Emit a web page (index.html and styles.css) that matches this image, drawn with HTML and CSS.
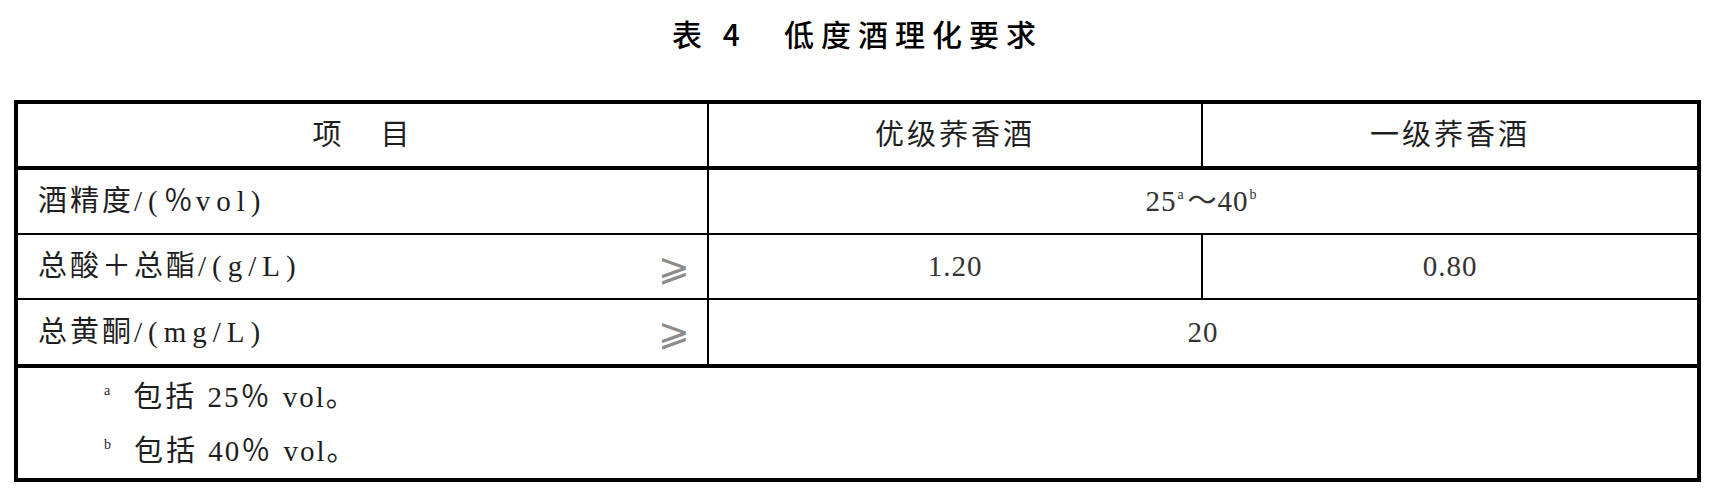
FILE: index.html
```html
<!DOCTYPE html>
<html lang="zh-CN">
<head>
<meta charset="utf-8">
<title>表 4 低度酒理化要求</title>
<link rel="stylesheet" href="styles.css">
</head>
<body>
<div class="page">
  <h1 class="title">表 4　低度酒理化要求</h1>
  <table class="spec">
    <colgroup>
      <col class="c1">
      <col class="c2">
      <col class="c3">
    </colgroup>
    <thead>
      <tr>
        <th class="head">项<span class="sp"></span>目</th>
        <th class="head">优级荞香酒</th>
        <th class="head last">一级荞香酒</th>
      </tr>
    </thead>
    <tbody>
      <tr>
        <td class="row">
          <div class="label"><span>酒精度<span class="lat">/(</span>％<span class="lat">vol)</span></span></div>
        </td>
        <td class="row val last" colspan="2">25<sup class="sup">a</sup>～40<sup class="sup">b</sup></td>
      </tr>
      <tr>
        <td class="row">
          <div class="label"><span>总酸＋总酯<span class="lat">/(g/L)</span></span><span class="ge">⩾</span></div>
        </td>
        <td class="row val">1.20</td>
        <td class="row val last">0.80</td>
      </tr>
      <tr>
        <td class="row end">
          <div class="label"><span>总黄酮<span class="lat">/(mg/L)</span></span><span class="ge">⩾</span></div>
        </td>
        <td class="row val end last" colspan="2">20</td>
      </tr>
      <tr>
        <td class="notes" colspan="3">
          <div class="note"><sup class="nsup">a</sup>包括 <span class="nlat">25</span>％ <span class="nlat">vol</span>。</div>
          <div class="note"><sup class="nsup">b</sup>包括 <span class="nlat">40</span>％ <span class="nlat">vol</span>。</div>
        </td>
      </tr>
    </tbody>
  </table>
</div>
</body>
</html>
```
FILE: styles.css
```css
* {
  box-sizing: border-box;
}

html,
body {
  margin: 0;
  background: #ffffff;
}

body {
  font-family: "Liberation Serif", "Noto Sans CJK SC", serif;
  color: #1e1e1e;
}

.page {
  padding: 13px 19px 0 14px;
}

.title {
  margin: 0;
  height: 40px;
  line-height: 40px;
  text-align: center;
  font-family: "Noto Sans CJK SC", sans-serif;
  font-size: 30px;
  font-weight: 500;
  letter-spacing: 7px;
  color: #000000;
}

.spec {
  margin-top: 47px;
  width: 1687px;
  table-layout: fixed;
  border-collapse: separate;
  border-spacing: 0;
  border: 4px solid #000000;
  font-size: 29px;
}

.c1 {
  width: 691px;
}

.c2 {
  width: 494px;
}

.c3 {
  width: 494px;
}

.spec th,
.spec td {
  padding: 0;
  font-weight: normal;
  border-right: 2px solid #000000;
  vertical-align: middle;
  line-height: 1.2;
}

.spec .last {
  border-right: 0;
}

.head {
  height: 66px;
  text-align: center;
  letter-spacing: 3px;
  border-bottom: 4px solid #000000;
}

.sp {
  display: inline-block;
  width: 36px;
}

.row {
  height: 65px;
  border-bottom: 2px solid #000000;
}

.row.end {
  height: 68px;
  border-bottom: 4px solid #000000;
}

.label {
  display: flex;
  justify-content: space-between;
  align-items: center;
  padding: 0 17px 0 20px;
  letter-spacing: 3px;
}

.lat {
  letter-spacing: 6px;
}

.ge {
  font-family: "DejaVu Sans", sans-serif;
  font-size: 38px;
  font-weight: 200;
  line-height: 1;
  letter-spacing: 0;
  color: #8c8c8c;
}

.val {
  text-align: center;
  letter-spacing: 1px;
  color: #333333;
}

.sup {
  font-size: 14px;
  vertical-align: 12px;
  line-height: 0;
  margin: 0 3px 0 1px;
}

.notes {
  height: 109px;
  border-right: 0 !important;
  padding: 2px 0 0 86px !important;
  vertical-align: top !important;
}

.note {
  height: 54px;
  line-height: 54px;
  letter-spacing: 3px;
}

.nlat {
  letter-spacing: 2px;
}

.nsup {
  font-size: 14px;
  vertical-align: 12px;
  line-height: 0;
  margin-right: 23px;
  letter-spacing: 0;
}
```
